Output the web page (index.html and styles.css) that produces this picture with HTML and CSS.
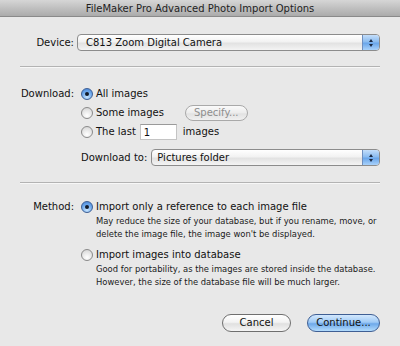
FILE: index.html
```html
<!DOCTYPE html>
<html lang="en">
<head>
    <meta charset="UTF-8">
    <meta name="viewport" content="width=device-width, initial-scale=1.0">
    <link rel="stylesheet" href="styles.css">
    <title>FileMaker Pro Advanced Photo Import Options</title>
</head>
<body>
    <div class="window">
        <!-- title bar -->
        <div class="titlebar">FileMaker Pro Advanced Photo Import Options</div>

        <div class="dialog">
            <!-- device -->
            <div class="section device-row">
                <span class="label">Device:</span>
                <div class="popup popup-device">
                    <span class="popup-text">C813 Zoom Digital Camera</span>
                    <span class="popup-arrows"><i class="up"></i><i class="down"></i></span>
                </div>
            </div>

            <div class="separator sep-1"></div>

            <!-- download -->
            <div class="section download">
                <span class="label">Download:</span>
                <div class="options">
                    <div class="radio-row">
                        <span class="radio on"></span>
                        <span>All images</span>
                    </div>
                    <div class="radio-row">
                        <span class="radio"></span>
                        <span class="some-text">Some images</span>
                        <span class="btn-small disabled">Specify...</span>
                    </div>
                    <div class="radio-row">
                        <span class="radio"></span>
                        <span>The last</span>
                        <span class="textfield">1</span>
                        <span>images</span>
                    </div>
                    <div class="download-to">
                        <span>Download to:</span>
                        <div class="popup popup-folder">
                            <span class="popup-text">Pictures folder</span>
                            <span class="popup-arrows"><i class="up"></i><i class="down"></i></span>
                        </div>
                    </div>
                </div>
            </div>

            <div class="separator sep-2"></div>

            <!-- method -->
            <div class="section method">
                <span class="label">Method:</span>
                <div class="options">
                    <div class="radio-row tight">
                        <span class="radio on"></span>
                        <span>Import only a reference to each image file</span>
                    </div>
                    <p class="desc">May reduce the size of your database, but if you rename, move, or<br>delete the image file, the image won't be displayed.</p>
                    <div class="radio-row tight second">
                        <span class="radio"></span>
                        <span>Import images into database</span>
                    </div>
                    <p class="desc">Good for portability, as the images are stored inside the database.<br>However, the size of the database file will be much larger.</p>
                </div>
            </div>

            <!-- buttons -->
            <div class="buttons">
                <span class="btn cancel">Cancel</span>
                <span class="btn default">Continue...</span>
            </div>
        </div>
    </div>
</body>
</html>
```

FILE: styles.css
```css
html {
    background-color: #e8e8e8;
}

body {
    margin: 0;
    padding: 0;
    font-family: "DejaVu Sans", Verdana, sans-serif;
    font-size: 10px;
    color: #111;
}

.window {
    width: 400px;
    height: 346px;
    overflow: hidden;
    background-color: #e8e8e8;
}

/* title bar */
.titlebar {
    height: 17px;
    line-height: 17px;
    text-align: center;
    color: #1e1e1e;
    background: linear-gradient(#d6d6d6, #c0c0c0 50%, #ababab);
    border-bottom: 1px solid #8a8a8a;
    box-sizing: border-box;
}

.dialog {
    padding: 0 20px 0 20px;
}

.section {
    display: grid;
    grid-template-columns: 54px 1fr;
    column-gap: 7px;
}

.label {
    text-align: right;
    line-height: 17px;
}

.download .label {
    line-height: 19px;
}

/* popups */
.device-row {
    margin-top: 17px;
}

.popup {
    height: 17px;
    box-sizing: border-box;
    border: 1px solid #8c8c8c;
    border-radius: 4px;
    background: linear-gradient(#ffffff, #f2f2f2 45%, #e2e2e2 55%, #f4f4f4);
    display: flex;
    align-items: center;
    overflow: hidden;
}

.popup-device {
    margin-left: -4px;
}

.popup-text {
    flex: 1;
    padding-left: 8px;
    line-height: 15px;
}

.popup-arrows {
    width: 16px;
    height: 15px;
    border-left: 1px solid #6f8fbf;
    background: linear-gradient(#c4defa, #8bbcf0 45%, #6aa6ea 55%, #a9d2fb);
    display: flex;
    flex-direction: column;
    align-items: center;
    justify-content: center;
    gap: 2px;
}

.popup-arrows i {
    width: 0;
    height: 0;
    border-left: 2.5px solid transparent;
    border-right: 2.5px solid transparent;
}

.popup-arrows .up {
    border-bottom: 3px solid #1b2a44;
}

.popup-arrows .down {
    border-top: 3px solid #1b2a44;
}

/* separators */
.separator {
    height: 0;
    border-top: 1px solid #b3b3b3;
    border-bottom: 1px solid #f7f7f7;
}

.sep-1 {
    margin-top: 15px;
}

.sep-2 {
    margin-top: 16px;
}

/* radios */
.download {
    margin-top: 16px;
}

.radio-row {
    height: 19px;
    display: flex;
    align-items: center;
}

.radio-row.tight {
    height: 17px;
}

.radio-row.second {
    margin-top: 6px;
}

.radio {
    width: 12px;
    height: 12px;
    box-sizing: border-box;
    border-radius: 50%;
    border: 1px solid #8a8a8a;
    background: radial-gradient(circle at 50% 75%, #ffffff, #e4e4e4 60%, #cfcfcf);
    margin-right: 3px;
    position: relative;
}

.radio.on {
    border-color: #3d5f95;
    background: radial-gradient(circle at 50% 80%, #c9e6ff, #6fa9ec 55%, #3f7fd4);
}

.radio.on::after {
    content: "";
    position: absolute;
    left: 3px;
    top: 3px;
    width: 4px;
    height: 4px;
    border-radius: 50%;
    background-color: #111a2a;
}

.some-text {
    width: 89px;
}

.btn-small {
    height: 16px;
    line-height: 14px;
    box-sizing: border-box;
    padding: 0 8px;
    border-radius: 8px;
    border: 1px solid #a9a9a9;
    background: linear-gradient(#fafafa, #ececec 50%, #e2e2e2 55%, #f0f0f0);
}

.btn-small.disabled {
    color: #8d8d8d;
}

.textfield {
    width: 37px;
    height: 16px;
    box-sizing: border-box;
    margin: 0 6px 0 4px;
    padding-left: 3px;
    line-height: 15px;
    background-color: #fff;
    border: 1px solid #c4c4c4;
    border-top-color: #9a9a9a;
}

.download-to {
    margin-top: 8px;
    display: flex;
    align-items: center;
    gap: 4px;
}

.popup-folder {
    flex: 1;
}

.popup-folder .popup-text {
    padding-left: 5px;
}

/* method */
.method {
    margin-top: 14px;
}

.desc {
    margin: 0;
    padding-left: 15px;
    font-size: 8.4px;
    line-height: 12.5px;
    color: #1a1a1a;
}

/* buttons */
.buttons {
    margin-top: 26px;
    display: flex;
    justify-content: flex-end;
    gap: 16px;
}

.btn {
    height: 18px;
    line-height: 16px;
    box-sizing: border-box;
    text-align: center;
    border-radius: 9px;
    border: 1px solid #6f6f6f;
    background: linear-gradient(#ffffff, #f3f3f3 45%, #e0e0e0 55%, #f5f5f5);
}

.btn.cancel {
    width: 69px;
}

.btn.default {
    width: 73px;
    border-color: #3f5f94;
    background: linear-gradient(#d3e8fd, #9fcaf6 45%, #6ea9ea 55%, #b3dcfd);
}
```
